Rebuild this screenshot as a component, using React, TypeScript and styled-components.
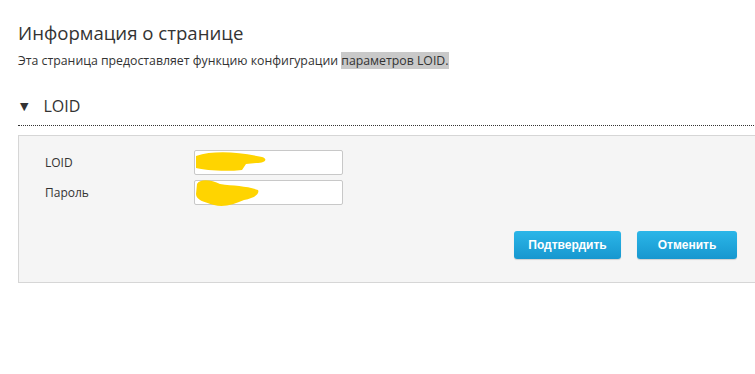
import React from 'react';
import styled, { createGlobalStyle } from 'styled-components';

const GlobalStyle = createGlobalStyle`
  html, body {
    margin: 0;
    padding: 0;
    background: #ffffff;
    overflow: hidden;
  }
  body {
    font-family: "Open Sans", "Noto Sans", "DejaVu Sans", sans-serif;
    color: #333333;
  }
`;

const Page = styled.div`
  width: 780px;
  padding: 20px 0 0 18px;
  box-sizing: border-box;
`;

const Title = styled.h1`
  margin: 0;
  font-size: 18.6px;
  font-weight: 400;
  line-height: 26px;
  color: #333333;
`;

const Intro = styled.p`
  margin: 7px 0 0;
  font-size: 12.3px;
  line-height: 16px;
  color: #333333;

  & mark {
    background: #c9c9c9;
    color: #333333;
  }
`;

const SectionHead = styled.div`
  display: flex;
  align-items: center;
  gap: 15px;
  margin-top: 26px;
  padding: 0 0 8px 2px;
  border-bottom: 1px dotted #333333;
  font-size: 16px;
  line-height: 22px;
  color: #333333;
`;

const Arrow = styled.span`
  font-size: 11px;
  line-height: 22px;
  color: #333333;
`;

const Panel = styled.div`
  margin-top: 9px;
  height: 148px;
  background: #f5f5f5;
  border: 1px solid #d6d6d6;
  border-right: none;
  box-sizing: border-box;
  padding: 13px 0 0 26px;
  display: flex;
  flex-direction: column;
`;

const Row = styled.div`
  display: flex;
  align-items: center;
  height: 26px;
  margin-bottom: 4px;
`;

const Label = styled.label`
  width: 149px;
  font-size: 12px;
  color: #333333;
`;

const Field = styled.div`
  position: relative;
  width: 149px;
  height: 25px;
`;

const Input = styled.input`
  width: 100%;
  height: 100%;
  box-sizing: border-box;
  border: 1px solid #c8c8c8;
  border-radius: 2px;
  background: #ffffff;
  outline: none;
  padding: 0 6px;
`;

const Scribble = styled.svg`
  position: absolute;
  left: 0;
  top: -2px;
  pointer-events: none;
`;

const Actions = styled.div`
  display: flex;
  gap: 16px;
  margin-top: 22px;
  padding-left: 469px;
`;

const Button = styled.button<{ $w: number }>`
  width: ${(p) => p.$w}px;
  height: 28px;
  border: none;
  border-radius: 3px;
  background: linear-gradient(#2bb6e8, #1797cf);
  box-shadow: 0 1px 1px rgba(0, 0, 0, 0.15);
  color: #ffffff;
  font-family: "Liberation Sans", Arial, sans-serif;
  font-size: 12px;
  font-weight: 700;
  cursor: pointer;
`;

export default function App() {
  return (
    <Page>
      <GlobalStyle />
      <Title>Информация о странице</Title>
      <Intro>
        Эта страница предоставляет функцию конфигурации <mark>параметров LOID.</mark>
      </Intro>
      <SectionHead>
        <Arrow>▼</Arrow>
        <span>LOID</span>
      </SectionHead>
      <Panel>
        <Row>
          <Label>LOID</Label>
          <Field>
            <Input type="text" />
            <Scribble width="80" height="30" viewBox="0 0 80 30">
              <path
                d="M2 8 C20 2 45 4 68 9 C74 11 72 15 62 15 L52 16 L48 22 C30 24 10 22 2 20 Z"
                fill="#ffd400"
              />
            </Scribble>
          </Field>
        </Row>
        <Row>
          <Label>Пароль</Label>
          <Field>
            <Input type="password" />
            <Scribble width="80" height="34" viewBox="0 0 80 34">
              <path
                d="M3 6 C6 0 18 2 26 6 C40 8 54 8 64 12 C66 16 60 20 50 22 C40 26 30 30 20 27 C10 24 2 22 2 16 Z"
                fill="#ffd400"
              />
            </Scribble>
          </Field>
        </Row>
        <Actions>
          <Button $w={107}>Подтвердить</Button>
          <Button $w={100}>Отменить</Button>
        </Actions>
      </Panel>
    </Page>
  );
}
